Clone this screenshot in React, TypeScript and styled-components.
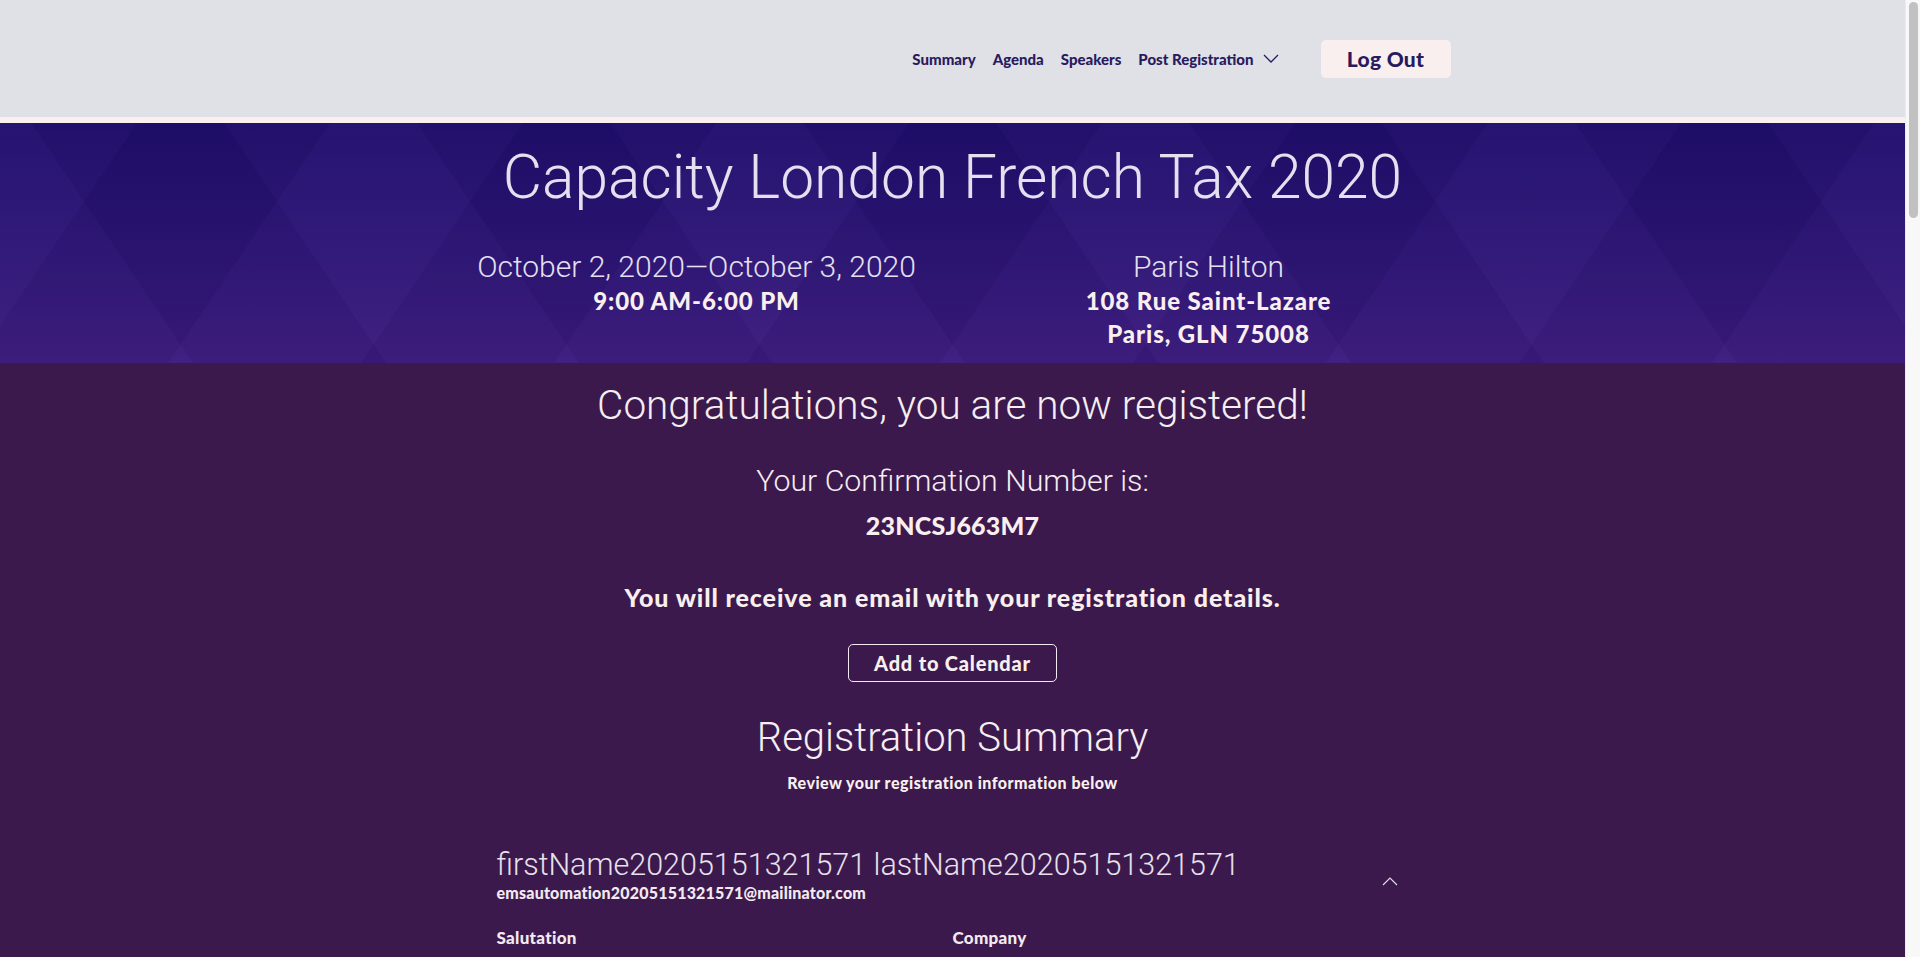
import React from "react";
import styled, { createGlobalStyle } from "styled-components";

const GlobalStyle = createGlobalStyle`
  html, body { margin: 0; padding: 0; }
  body {
    background: #3c194d;
    font-family: "Lato", "Liberation Sans", sans-serif;
    -webkit-font-smoothing: antialiased;
  }
  * { box-sizing: border-box; }
`;

const Shell = styled.div`
  display: flex;
  align-items: flex-start;
`;

const Page = styled.div`
  flex: 1;
  min-width: 0;
  min-height: 4240px;
  display: flex;
  flex-direction: column;
  background: #3c194d;
`;

const ScrollTrack = styled.aside`
  flex: none;
  width: 15px;
  height: 100vh;
  position: sticky;
  top: 0;
  background: #f8f8f8;
  border-left: 1px solid #ececec;
  padding: 2px 2px 0 3px;
`;

const ScrollThumb = styled.div`
  height: 216px;
  border-radius: 5px;
  background: #c1c1c1;
`;

const Header = styled.header`
  height: 123px;
  background: #dfe1e6;
  border-bottom: 6px solid #f9f0ef;
`;

const HeaderInner = styled.div`
  max-width: 996px;
  height: 100%;
  margin: 0 auto;
  display: flex;
  align-items: center;
  justify-content: flex-end;
`;

const Nav = styled.nav`
  display: flex;
  align-items: center;
  gap: 17px;
  margin-right: 42px;
`;

const NavLink = styled.a`
  font-family: "Lato", sans-serif;
  font-weight: 900;
  font-size: 15px;
  color: #2a1a5e;
  text-decoration: none;
  display: flex;
  align-items: center;
  gap: 9px;
`;

const LogOutButton = styled.button`
  width: 130px;
  height: 38px;
  border: none;
  border-radius: 5px;
  background: #f9efee;
  color: #2a1a5e;
  font-family: "Lato", sans-serif;
  font-weight: 900;
  font-size: 21px;
  letter-spacing: 0.3px;
  cursor: pointer;
`;

const Hero = styled.section`
  height: 240px;
  padding-top: 19px;
  color: #e4e0ef;
  text-align: center;
  background:
    repeating-linear-gradient(56deg, rgba(255,255,255,0.014) 0 160px, rgba(0,0,0,0.022) 160px 320px),
    repeating-linear-gradient(-56deg, rgba(255,255,255,0.014) 0 160px, rgba(0,0,0,0.022) 160px 320px),
    linear-gradient(180deg, #1f0d6c 0%, #2c1475 55%, #3a1a7c 100%);
`;

const Title = styled.h1`
  margin: 0;
  font-family: "Roboto", sans-serif;
  font-weight: 300;
  font-size: 60.5px;
  line-height: 72px;
  color: #e4e0ef;
`;

const InfoGrid = styled.div`
  width: 1024px;
  margin: 36px auto 0;
  display: grid;
  grid-template-columns: 1fr 1fr;
`;

const InfoCol = styled.div`
  display: flex;
  flex-direction: column;
  align-items: center;
`;

const LightLine = styled.div`
  font-family: "Roboto", sans-serif;
  font-weight: 300;
  font-size: 30px;
  line-height: 34px;
  color: #e4e0ef;
`;

const StrongLine = styled.div`
  font-family: "Lato", sans-serif;
  font-weight: 900;
  font-size: 24px;
  letter-spacing: 0.9px;
  line-height: 33px;
  color: #f9efee;
`;

const StrongGroup = styled.div`
  display: flex;
  flex-direction: column;
  align-items: center;
`;

const Main = styled.main`
  flex: 1;
  background: #3c194d;
  display: flex;
  flex-direction: column;
  align-items: center;
  text-align: center;
  color: #f9efee;
  padding-top: 20px;
`;

const Heading = styled.h2<{ $size: number; $lh: number; $mt: number }>`
  margin: ${(p) => p.$mt}px 0 0;
  font-family: "Roboto", sans-serif;
  font-weight: 300;
  font-size: ${(p) => p.$size}px;
  line-height: ${(p) => p.$lh}px;
  color: #f5eef2;
`;

const BoldText = styled.p<{ $size: number; $lh: number; $mt: number; $ls: number }>`
  margin: ${(p) => p.$mt}px 0 0;
  font-family: "Lato", sans-serif;
  font-weight: 900;
  font-size: ${(p) => p.$size}px;
  letter-spacing: ${(p) => p.$ls}px;
  line-height: ${(p) => p.$lh}px;
  color: #f9efee;
`;

const CalendarButton = styled.button`
  margin-top: 31px;
  width: 209px;
  height: 38px;
  border: 1px solid #f3e9ef;
  border-radius: 5px;
  background: transparent;
  color: #f9efee;
  font-family: "Lato", sans-serif;
  font-weight: 900;
  font-size: 20px;
  letter-spacing: 0.8px;
  cursor: pointer;
`;

const AttendeeCard = styled.div`
  width: 912px;
  margin-top: 54px;
  text-align: left;
`;

const AttendeeHead = styled.div`
  display: flex;
  align-items: center;
  justify-content: space-between;
  padding-right: 11px;
`;

const ToggleIcon = styled.span`
  display: flex;
  margin-top: 12px;
`;

const AttendeeName = styled.div`
  font-family: "Roboto", sans-serif;
  font-weight: 300;
  font-size: 30.5px;
  line-height: 35px;
  color: #e6e1ec;
`;

const AttendeeEmail = styled.div`
  margin-top: 1px;
  font-family: "Lato", sans-serif;
  font-weight: 900;
  font-size: 16px;
  letter-spacing: 0.2px;
  line-height: 20px;
  color: #f3eaf0;
`;

const FieldGrid = styled.div`
  margin-top: 25px;
  display: grid;
  grid-template-columns: 456px 456px;
  row-gap: 28px;
`;

const Field = styled.div`
  display: flex;
  flex-direction: column;
  gap: 6px;
`;

const FieldLabel = styled.div`
  font-family: "Lato", sans-serif;
  font-weight: 900;
  font-size: 17px;
  letter-spacing: 0.3px;
  line-height: 20px;
  color: #f3eaf0;
`;

const FieldValue = styled.div`
  font-family: "Roboto", sans-serif;
  font-weight: 300;
  font-size: 18px;
  line-height: 24px;
  color: #e6e1ec;
`;

const ChevronDown = () => (
  <svg width="16" height="9" viewBox="0 0 16 9" fill="none">
    <path d="M1 1 L8 8 L15 1" stroke="#2a1a5e" strokeWidth="1.3" />
  </svg>
);

const ChevronUp = () => (
  <svg width="16" height="9" viewBox="0 0 16 9" fill="none">
    <path d="M1 8 L8 1 L15 8" stroke="#e6e1ec" strokeWidth="1.1" />
  </svg>
);

const fields: [string, string][] = [
  ["Salutation", "Mr."],
  ["Company", "EMS Automation"],
  ["First Name", "firstName20205151321571"],
  ["Last Name", "lastName20205151321571"],
  ["Job Title", "QA Engineer"],
  ["Email Address", "emsautomation20205151321571@mailinator.com"],
  ["Phone", "555-0100"],
  ["Country", "France"],
];

export default function App() {
  return (
    <Shell>
      <GlobalStyle />
      <Page>
        <Header>
          <HeaderInner>
            <Nav>
              <NavLink href="#">Summary</NavLink>
              <NavLink href="#">Agenda</NavLink>
              <NavLink href="#">Speakers</NavLink>
              <NavLink href="#">
                Post Registration <ChevronDown />
              </NavLink>
            </Nav>
            <LogOutButton>Log Out</LogOutButton>
          </HeaderInner>
        </Header>

        <Hero>
          <Title>Capacity London French Tax 2020</Title>
          <InfoGrid>
            <InfoCol>
              <LightLine>October 2, 2020—October 3, 2020</LightLine>
              <StrongGroup>
                <StrongLine>9:00 AM-6:00 PM</StrongLine>
              </StrongGroup>
            </InfoCol>
            <InfoCol>
              <LightLine>Paris Hilton</LightLine>
              <StrongGroup>
                <StrongLine>108 Rue Saint-Lazare</StrongLine>
                <StrongLine>Paris, GLN 75008</StrongLine>
              </StrongGroup>
            </InfoCol>
          </InfoGrid>
        </Hero>

        <Main>
          <Heading $size={40.5} $lh={44} $mt={0}>
            Congratulations, you are now registered!
          </Heading>
          <Heading $size={30.3} $lh={36} $mt={36}>
            Your Confirmation Number is:
          </Heading>
          <BoldText $size={25} $lh={32} $mt={10} $ls={0.2}>
            23NCSJ663M7
          </BoldText>
          <BoldText $size={25} $lh={32} $mt={40} $ls={0.9}>
            You will receive an email with your registration details.
          </BoldText>
          <CalendarButton>Add to Calendar</CalendarButton>
          <Heading $size={40} $lh={46} $mt={33}>
            Registration Summary
          </Heading>
          <BoldText $size={16} $lh={20} $mt={12} $ls={0.5}>
            Review your registration information below
          </BoldText>

          <AttendeeCard>
            <AttendeeHead>
              <div>
                <AttendeeName>
                  firstName20205151321571 lastName20205151321571
                </AttendeeName>
                <AttendeeEmail>
                  emsautomation20205151321571@mailinator.com
                </AttendeeEmail>
              </div>
              <ToggleIcon>
                <ChevronUp />
              </ToggleIcon>
            </AttendeeHead>
            <FieldGrid>
              {fields.map(([label, value]) => (
                <Field key={label}>
                  <FieldLabel>{label}</FieldLabel>
                  <FieldValue>{value}</FieldValue>
                </Field>
              ))}
            </FieldGrid>
          </AttendeeCard>
        </Main>
      </Page>
      <ScrollTrack>
        <ScrollThumb />
      </ScrollTrack>
    </Shell>
  );
}
